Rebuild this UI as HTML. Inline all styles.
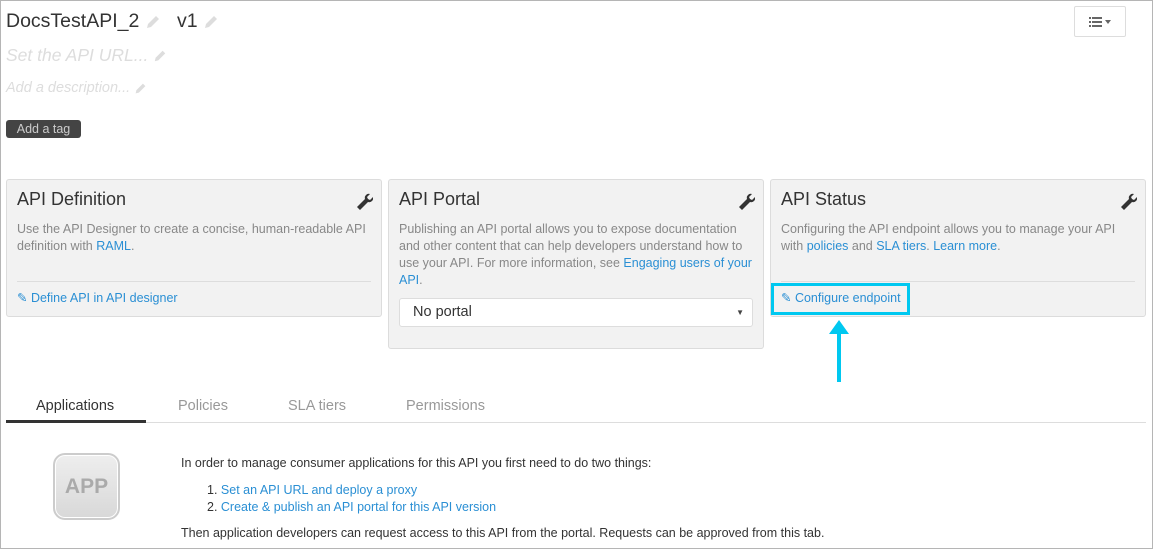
<!DOCTYPE html>
<html><head><meta charset="utf-8"><style>
*{margin:0;padding:0;box-sizing:border-box}
body{width:1153px;height:549px;background:#fff;font-family:"Liberation Sans",sans-serif;position:relative;overflow:hidden;color:#333}
.frame{position:absolute;left:0;top:0;width:1153px;height:549px;border:1px solid #b5b5b5;pointer-events:none}
.a{position:absolute;white-space:nowrap}
a{color:#2a8fd4;text-decoration:none}
.card{position:absolute;background:#f2f2f2;border:1px solid #dcdcdc;border-radius:3px}
.card h2{position:absolute;left:10px;top:9px;font-size:18px;font-weight:normal;color:#333}
.card p{position:absolute;left:10px;top:41px;font-size:12.5px;line-height:17px;color:#888;white-space:normal}
.wr{position:absolute;right:8px;top:12px}
.hr{position:absolute;left:10px;right:10px;top:101px;border-top:1px solid #ddd}
.lk{position:absolute;left:10px;top:110px;font-size:12.5px;color:#2a8fd4}
.tab{position:absolute;top:398px;font-size:14.5px;color:#999}
.pen{display:inline-block;vertical-align:middle}
.t{font-size:12.5px}
</style></head><body>
<div class="a" style="left:6px;top:10px;font-size:19.5px;color:#333">DocsTestAPI_2 <svg class="pen" width="16" height="16" viewBox="0 0 16 16"><path d="M2 14l1-4 8-8 3 3-8 8z" fill="#ddd"/></svg> &nbsp;&nbsp;v1 <svg class="pen" width="16" height="16" viewBox="0 0 16 16"><path d="M2 14l1-4 8-8 3 3-8 8z" fill="#ddd"/></svg></div>
<div class="a" style="left:6px;top:45px;font-size:17.5px;font-style:italic;color:#ddd">Set the API URL... <svg class="pen" width="14" height="14" viewBox="0 0 16 16"><path d="M2 14l1-4 8-8 3 3-8 8z" fill="#ddd"/></svg></div>
<div class="a" style="left:6px;top:80px;font-size:14.5px;font-style:italic;color:#ddd">Add a description... <svg class="pen" width="13" height="13" viewBox="0 0 16 16"><path d="M2 14l1-4 8-8 3 3-8 8z" fill="#ddd"/></svg></div>
<div class="a" style="left:6px;top:120px;width:75px;height:18px;background:#444;border-radius:3px;color:#ccc;font-size:12.5px;line-height:18px;text-align:center">Add a tag</div>
<div class="a" style="left:1074px;top:6px;width:52px;height:31px;border:1px solid #ddd;border-radius:2px">
<svg style="position:absolute;left:14px;top:9px" width="24" height="12" viewBox="0 0 24 12"><g fill="#666"><rect x="0" y="1" width="2" height="2"/><rect x="0" y="5" width="2" height="2"/><rect x="0" y="9" width="2" height="2"/><rect x="3" y="1" width="10" height="2"/><rect x="3" y="5" width="10" height="2"/><rect x="3" y="9" width="10" height="2"/><path d="M16 4h6l-3 4z"/></g></svg></div>

<div class="card" style="left:6px;top:179px;width:376px;height:138px">
<h2>API Definition</h2>
<svg class="wr" width="18" height="18" viewBox="0 0 18 18"><path d="M2 16l8-8a4 4 0 0 1 5-5l-3 3 1 2 2 1 3-3a4 4 0 0 1-5 5l-8 8z" fill="#333" transform="translate(0,-1)"/></svg>
<p style="width:356px">Use the API Designer to create a concise, human-readable API definition with <a>RAML</a>.</p>
<div class="hr"></div>
<div class="lk">&#9998; Define API in API designer</div>
</div>
<div class="card" style="left:388px;top:179px;width:376px;height:170px">
<h2>API Portal</h2>
<svg class="wr" width="18" height="18" viewBox="0 0 18 18"><path d="M2 16l8-8a4 4 0 0 1 5-5l-3 3 1 2 2 1 3-3a4 4 0 0 1-5 5l-8 8z" fill="#333" transform="translate(0,-1)"/></svg>
<p style="width:356px">Publishing an API portal allows you to expose documentation and other content that can help developers understand how to use your API. For more information, see <a>Engaging users of your API</a>.</p>
<div style="position:absolute;left:10px;top:118px;width:354px;height:29px;background:#fff;border:1px solid #ddd;border-radius:3px;font-size:14.5px;line-height:27px;padding-left:13px;color:#333">No portal<span style="position:absolute;right:8px;top:0;font-size:8px;color:#444">&#9660;</span></div>
</div>
<div class="card" style="left:770px;top:179px;width:376px;height:138px">
<h2>API Status</h2>
<svg class="wr" width="18" height="18" viewBox="0 0 18 18"><path d="M2 16l8-8a4 4 0 0 1 5-5l-3 3 1 2 2 1 3-3a4 4 0 0 1-5 5l-8 8z" fill="#333" transform="translate(0,-1)"/></svg>
<p style="width:345px">Configuring the API endpoint allows you to manage your API with <a>policies</a> and <a>SLA tiers</a>. <a>Learn more</a>.</p>
<div class="hr"></div>
<div class="lk">&#9998; Configure endpoint</div>
</div>
<div class="a" style="left:771px;top:283px;width:139px;height:32px;border:3px solid #00c8f0"></div>
<svg class="a" style="left:826px;top:318px" width="26" height="66" viewBox="0 0 26 66"><path d="M13 2L3 16h8v48h4V16h8z" fill="#00c8f0"/></svg>

<div class="tab" style="left:36px;color:#333">Applications</div>
<div class="tab" style="left:178px">Policies</div>
<div class="tab" style="left:288px">SLA tiers</div>
<div class="tab" style="left:406px">Permissions</div>
<div class="a" style="left:6px;top:422px;width:1140px;height:1px;background:#ddd"></div>
<div class="a" style="left:6px;top:420px;width:140px;height:3px;background:#333"></div>

<div class="a" style="left:53px;top:453px;width:67px;height:67px;border-radius:12px;background:linear-gradient(#eee,#d8d8d8);border:2px solid #ccc;box-shadow:inset 0 0 0 1px #fff;color:#aaa;font-weight:bold;font-size:21px;text-align:center;line-height:63px">APP</div>
<div class="a t" style="left:181px;top:456px">In order to manage consumer applications for this API you first need to do two things:</div>
<div class="a t" style="left:207px;top:483px">1. <a>Set an API URL and deploy a proxy</a></div>
<div class="a t" style="left:207px;top:500px">2. <a>Create &amp; publish an API portal for this API version</a></div>
<div class="a t" style="left:181px;top:526px">Then application developers can request access to this API from the portal. Requests can be approved from this tab.</div>
<div class="frame"></div>
</body></html>
